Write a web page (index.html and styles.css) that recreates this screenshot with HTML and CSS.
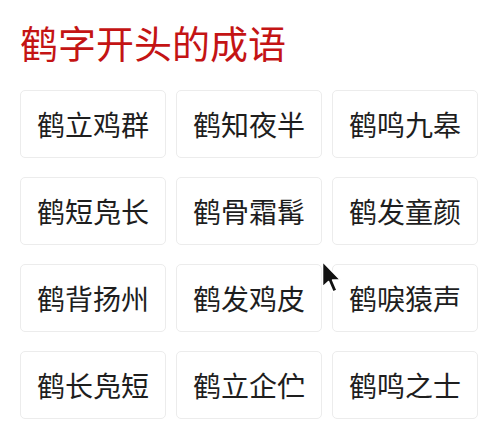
FILE: index.html
```html
<!DOCTYPE html>
<html lang="zh">
<head>
<meta charset="utf-8">
<title>鹤字开头的成语</title>
<link rel="stylesheet" href="styles.css">
</head>
<body>
<div class="page">
  <h1 class="title">鹤字开头的成语</h1>
  <div class="grid">
    <div class="card">鹤立鸡群</div>
    <div class="card">鹤知夜半</div>
    <div class="card">鹤鸣九皋</div>
    <div class="card">鹤短凫长</div>
    <div class="card">鹤骨霜髯</div>
    <div class="card">鹤发童颜</div>
    <div class="card">鹤背扬州</div>
    <div class="card">鹤发鸡皮</div>
    <div class="card">鹤唳猿声</div>
    <div class="card">鹤长凫短</div>
    <div class="card">鹤立企伫</div>
    <div class="card">鹤鸣之士</div>
  </div>
</div>
<svg class="cursor" width="22" height="36" viewBox="0 0 22 36">
  <path d="M1.5 1.5 L1.5 27 L7.5 21.5 L12 32 L16 30.3 L11.6 20 L19.5 20 Z" fill="#111" stroke="#fff" stroke-width="1.6" stroke-linejoin="round"/>
</svg>
</body>
</html>
```
FILE: styles.css
```css
html, body {
  margin: 0;
  padding: 0;
  background: #fff;
  overflow: hidden;
}
body {
  width: 500px;
  height: 422px;
  position: relative;
  font-family: "Noto Sans CJK SC", "Noto Sans", sans-serif;
}
.page {
  padding: 20px 22px 0 20px;
}
.title {
  margin: 0;
  font-size: 38px;
  line-height: 44px;
  font-weight: 400;
  color: #c41414;
}
.grid {
  margin-top: 26px;
  display: grid;
  grid-template-columns: repeat(3, 146px);
  column-gap: 10px;
  row-gap: 19px;
}
.card {
  height: 68px;
  box-sizing: border-box;
  border: 1px solid #ececec;
  border-radius: 5px;
  display: flex;
  align-items: center;
  justify-content: center;
  font-size: 28px;
  color: #1e1e1e;
  letter-spacing: 0;
}
.cursor {
  position: absolute;
  left: 321px;
  top: 260px;
}
```
